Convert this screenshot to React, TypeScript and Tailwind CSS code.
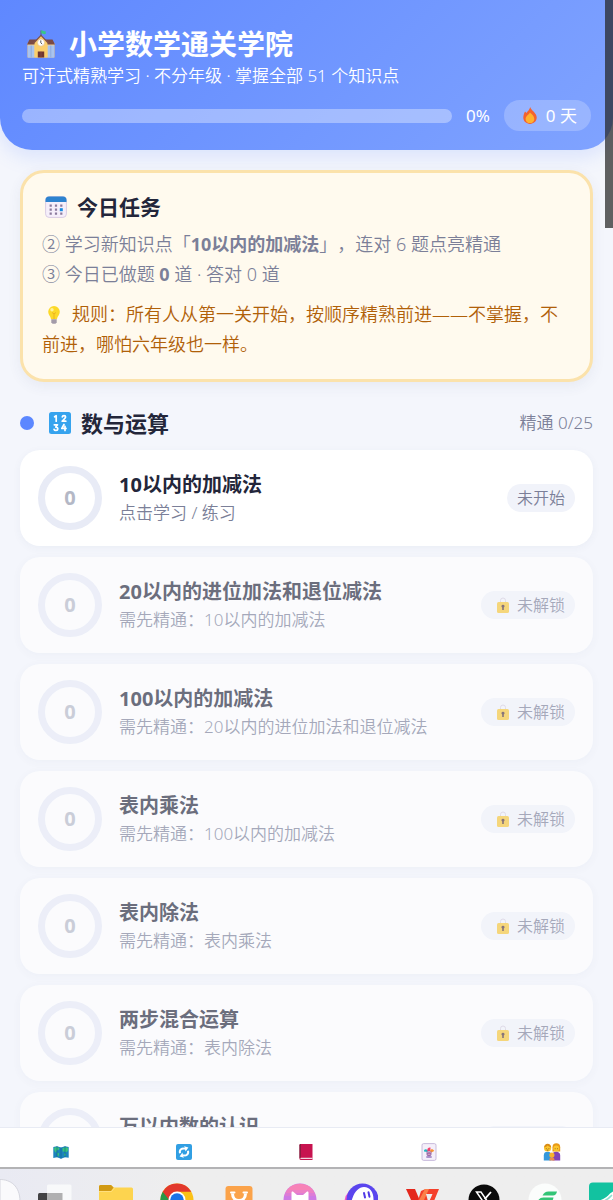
import type { ReactNode } from "react";
import { Lock } from "lucide-react";

type Topic = {
  name: string;
  hint: string;
  locked: boolean;
};

const topics: Topic[] = [
  { name: "10以内的加减法", hint: "点击学习 / 练习", locked: false },
  { name: "20以内的进位加法和退位减法", hint: "需先精通：10以内的加减法", locked: true },
  { name: "100以内的加减法", hint: "需先精通：20以内的进位加法和退位减法", locked: true },
  { name: "表内乘法", hint: "需先精通：100以内的加减法", locked: true },
  { name: "表内除法", hint: "需先精通：表内乘法", locked: true },
  { name: "两步混合运算", hint: "需先精通：表内除法", locked: true },
  { name: "万以内数的认识", hint: "需先精通：两步混合运算", locked: true },
];

/* ---------- Emoji-style icons ---------- */

const SchoolIcon = () => (
  <svg viewBox="0 0 28 28" className="h-7 w-7 shrink-0" aria-hidden="true">
    <path d="M0.500 13h27v14.500H.5z" fill="#f0cf94" />
    <path d="M2.500 9.500h23L28 14.500H0z" fill="#7a4a45" />
    <path d="M1 15.500h6.500v12H1zM20.500 15.500H27v12h-6.500z" fill="#a9c4ee" />
    <path d="M4.200 15.500v12M23.800 15.500v12" stroke="#8fabdd" strokeWidth="1" />
    <path d="M7.500 12.500 14 5.500l6.500 7v15h-13z" fill="#fbcf6b" />
    <path d="M6.500 13.200 14 5.400l7.500 7.800" fill="none" stroke="#84524a" strokeWidth="1.300" />
    <path d="M14 6V.5" stroke="#5c5560" strokeWidth="0.900" />
    <path d="M14.300.3c2 0 2 1.400 4.400 1v2.800c-2.400.5-2.400-.8-4.400-.8z" fill="#36c982" />
    <circle cx="14" cy="12.600" r="3.600" fill="#fff" stroke="#e3bd84" strokeWidth="0.700" />
    <path d="M13.800 10.400v2.400l1.400 1.300" fill="none" stroke="#444" strokeWidth="0.900" />
    <path d="M10.800 21.500h6.400v6h-6.400z" fill="#70362f" />
    <path d="M14 21.500v6" stroke="#955548" strokeWidth="0.600" />
  </svg>
);

const FireIcon = () => (
  <svg viewBox="0 0 14 17" className="h-[17px] w-[14px] shrink-0" aria-hidden="true">
    <path d="M7.200 0c.3 1.800 2.200 3.200 3.600 4.800 1.600 1.900 2.900 3.600 2.900 5.800 0 3.800-3 6.300-6.700 6.300S.3 14.400.3 10.600C.3 8.200 1.300 6.300 2 4.500c.6.300 1.100.9 1.300 1.600C4.500 4.300 6.700 2.700 7.200 0z" fill="#f4622e" />
    <path d="M7 5.400c1.700 1.800 4.300 3.400 4.300 6.500 0 2.500-1.800 4.200-4.300 4.200s-4.400-1.700-4.400-4.200C2.600 9.100 5.600 7.800 7 5.400z" fill="#ffb22e" />
  </svg>
);

const CalendarIcon = () => (
  <svg viewBox="0 0 22 22" className="h-[22px] w-[22px] shrink-0" aria-hidden="true">
    <rect x="0.600" y="0.600" width="20.800" height="20.800" rx="3.500" fill="#f6effa" stroke="#d9cce4" strokeWidth="1" />
    <path d="M0.500 6V4A3.500 3.500 0 0 1 4 .5h14A3.500 3.500 0 0 1 21.500 4v2z" fill="#2d83cf" />
    <g fill="#8b7b9d">
      <path d="M4.600 8.500h2.200v2.200H4.600zM9.900 8.500h2.200v2.200H9.900zM15.200 8.500h2.200v2.200h-2.200zM4.600 12.500h2.200v2.200H4.600zM9.900 12.500h2.200v2.200H9.900zM4.600 16.500h2.200v2.200H4.600zM9.900 16.500h2.200v2.200H9.900zM15.200 16.500h2.200v2.200h-2.200z" />
    </g>
    <path d="M14.800 12.200h3v3h-3z" fill="#168be0" />
  </svg>
);

const BulbIcon = () => (
  <svg viewBox="0 0 18 18" className="mr-2 ml-1 inline-block h-[18px] w-[18px] align-[-3px]" aria-hidden="true">
    <path d="M8 0a5.800 5.800 0 0 0-5.800 5.800c0 3 2.300 4.200 2.900 7.400h5.800c.6-3.200 2.900-4.400 2.900-7.400A5.800 5.800 0 0 0 8 0z" fill="#fcd928" />
    <path d="M6 6.500l2 1.400 2-1.400M8 8v5" fill="none" stroke="#eaa91c" strokeWidth="0.800" />
    <circle cx="6" cy="3.800" r="1.700" fill="#fff19a" />
    <path d="M5.300 13.200h5.400v3L9.500 17.800h-3l-1.200-1.600z" fill="#a39ba9" />
  </svg>
);

const NumbersIcon = () => (
  <svg viewBox="0 0 22 22" className="h-[22px] w-[22px] shrink-0" aria-hidden="true">
    <rect width="22" height="22" rx="2.500" fill="#36a3ee" />
    <g fill="none" stroke="#fff" strokeWidth="1.700" strokeLinecap="round" strokeLinejoin="round">
      <path d="M5.600 4.800 7.200 3.700v5.500" />
      <path d="M13.300 4.900c.2-1.600 3.300-1.700 3.300.2 0 1.500-2.500 2.400-3.400 4.100h3.600" />
      <path d="M5.300 12.800h3.200l-1.700 2.300c2.700-.1 2.500 3.300.1 3.300-.9 0-1.600-.4-1.800-1" />
      <path d="M15 12.500l-2.200 3.900h4.200M16 14.300v4.200" />
    </g>
  </svg>
);

const PadlockIcon = () => (
  <span className="relative flex h-4 w-3 shrink-0 items-end justify-center" aria-hidden="true">
    <Lock className="absolute top-0 h-3 w-3 text-[#d5cedd]" strokeWidth={2} />
    <svg viewBox="0 0 12 11" className="relative h-[11px] w-3">
      <rect width="12" height="11" rx="1.600" fill="#f6c637" />
      <path d="M6 2.700a1.500 1.500 0 0 1 .8 2.800V8H5.200V5.500A1.500 1.500 0 0 1 6 2.700z" fill="#4d2f35" />
    </svg>
  </span>
);

const MapIcon = () => (
  <svg viewBox="0 0 16 16" className="h-4 w-4" aria-hidden="true">
    <path d="M.3 3 4 2.200 8 3.400l4-1.200 3.700.8v10.800L12 13.300l-4 1.400-4-1.400-3.700.6z" fill="#1c83bd" />
    <path d="M1 3.800 3.800 3l2.700 1-.8 2-2 .6-.5 2.400L1.500 7zM9.500 4.200 12 3.200l3 .6v3l-2 1.600-1.500-.9-1.800.3zM4.300 8.500l2 1-.8 3-1.200-.6zM11 9.300l2 .8-.8 2.200-1.300-.8z" fill="#36c37b" />
    <path d="M4 2.200v11M8 3.400v11.200M12 2.200v11" stroke="#125f92" strokeWidth="0.600" />
  </svg>
);

const RefreshIcon = () => (
  <svg viewBox="0 0 16 16" className="h-4 w-4" aria-hidden="true">
    <rect width="16" height="16" rx="2" fill="#319fe3" />
    <path d="M4 9.200C3 5.800 6 3.700 9 4.900M12 6.800c1 3.400-2 5.500-5 4.300" fill="none" stroke="#fff" strokeWidth="2" />
    <path d="M8.200 2.300l4.200 1.200-2.800 4zM7.800 13.700l-4.200-1.200 2.800-4z" fill="#fff" />
  </svg>
);

const BookIcon = () => (
  <svg viewBox="0 0 16 16" className="h-4 w-4" aria-hidden="true">
    <path d="M1.500 1.200C1.500.5 2 0 2.700 0h11.800v16H3a1.500 1.500 0 0 1-1.500-1.500z" fill="#c7134f" />
    <path d="M1.500 1.200C1.500.5 2 0 2.700 0v13.500l-1.200.8z" fill="#6f2038" />
    <path d="M3 13.800h11.500V15H3a.6.600 0 0 1 0-1.200z" fill="#efd6df" />
  </svg>
);

const JokerIcon = () => (
  <svg viewBox="0 0 16 18" className="h-[18px] w-4" aria-hidden="true">
    <rect x="1" y="0.600" width="14" height="16.800" rx="1.600" fill="#f4effa" stroke="#c3b4d8" strokeWidth="0.900" />
    <path d="M3 8.500C2.800 5.800 5 5.500 7 7.300L6.500 9z" fill="#25b5c1" />
    <path d="M6.300 8.300C6 5.500 7.200 4.200 9.500 4.500L9.300 8z" fill="#f2416f" />
    <path d="M9 8.200c.5-2.300 3-2.600 4.200-.2L10.300 9.500z" fill="#f79431" />
    <path d="M5.500 8.500h5v2.700c0 1.200-1 2-2.500 2s-2.500-.8-2.500-2z" fill="#9a6aa8" />
    <path d="M6.500 9.500h.9M8.700 9.500h.9M6.700 11.300h2.700" stroke="#f7c4d4" strokeWidth="0.700" />
    <path d="M5.300 14h5.400" stroke="#7d57b0" strokeWidth="1.200" />
  </svg>
);

const FamilyIcon = () => (
  <svg viewBox="0 0 18 18" className="h-[18px] w-[18px]" aria-hidden="true">
    <path d="M9.500 8.500V4.200a3.800 3.800 0 0 1 7.700 0v4.300z" fill="#e89a17" />
    <path d="M.8 17.400v-5c0-2.500 1.400-3.600 3.800-3.600s3.900 1.200 3.900 3.600v5z" fill="#3498db" />
    <path d="M9.300 17.400v-5c0-2.500 1.500-3.600 3.900-3.600s4 1.200 4 3.600v5z" fill="#8043b8" />
    <circle cx="4.600" cy="5" r="3.600" fill="#fcc52c" />
    <path d="M1.100 4.500C1.100-.6 8.200-.6 8.200 4.500 6.500 4 5.300 3.300 4.600 2.600 3.800 3.600 2.500 4.300 1.100 4.500z" fill="#d98c16" />
    <circle cx="13.300" cy="5.400" r="2.900" fill="#fcc52c" />
    <path d="M3.300 5.300v.8M5.900 5.300v.8M12.200 5.400v.8M14.500 5.400v.8M3.800 7.100h1.600" stroke="#5b3a1e" strokeWidth="0.700" />
    <circle cx="8.900" cy="12" r="2.600" fill="#f7b32b" />
    <path d="M6.300 17.400c0-2.500 1-3.200 2.600-3.200s2.700.7 2.700 3.200z" fill="#e98a4a" />
  </svg>
);

const navItems = [
  { label: "地图", icon: <MapIcon /> },
  { label: "复习", icon: <RefreshIcon /> },
  { label: "错题本", icon: <BookIcon /> },
  { label: "卡片", icon: <JokerIcon /> },
  { label: "家长", icon: <FamilyIcon /> },
];

/* ---------- Desktop taskbar icons ---------- */

const taskbarApps: { label: string; art: ReactNode }[] = [
  {
    label: "任务视图",
    art: (
      <>
        <rect x="0" y="11" width="25" height="24" rx="1.500" fill="#424244" />
        <rect x="9" y="2.500" width="24.500" height="24" rx="1.500" fill="#f8f9fa" />
        <path d="M9 11h15.500v16H9z" fill="#b0b0b1" />
      </>
    ),
  },
  {
    label: "文件资源管理器",
    art: (
      <>
        <path d="M0 4.500A1.500 1.500 0 0 1 1.500 3H12l3 2.500h17.500A1.500 1.500 0 0 1 34 7v28H0z" fill="#fdd44f" />
        <path d="M0 4.500A1.500 1.500 0 0 1 1.500 3H12l2.500 2.500L12 9H0z" fill="#d19a14" />
        <path d="M0 9.500h12.500L15.500 6" fill="none" stroke="#ffe28a" strokeWidth="0.800" />
      </>
    ),
  },
  {
    label: "Chrome",
    art: (
      <>
        <circle cx="17" cy="18" r="16.500" fill="#fbc116" />
        <path d="M17 18 2.700 9.700A16.500 16.500 0 0 0 17 34.500z" fill="#279847" />
        <path d="M2.700 9.700a16.500 16.500 0 0 1 28.600 0H17L10 19z" fill="#e2382c" />
        <circle cx="17" cy="18" r="8.500" fill="#fff" />
        <circle cx="17" cy="18" r="6.800" fill="#1a73e8" />
      </>
    ),
  },
  {
    label: "商城",
    art: (
      <>
        <rect x="3.500" y="4" width="27" height="28" rx="3" fill="#fba34a" />
        <path d="M10.500 11.500c0 4 2.500 7 6.500 7s6.500-3 6.500-7" fill="none" stroke="#fff" strokeWidth="3" />
        <path d="M9 10.500h3.500M21.500 10.500H25" stroke="#fff" strokeWidth="2" strokeLinecap="round" />
      </>
    ),
  },
  {
    label: "猫猫",
    art: (
      <>
        <circle cx="17" cy="18" r="16.500" fill="#ce7ae5" />
        <path d="M4 8a16.500 16.500 0 0 1 26 0z" fill="#f783b7" />
        <path d="M4 8h26l1.700 3H2.300z" fill="#ec80c6" />
        <path d="M2.300 11h29.400l1 3H1.300z" fill="#dd7cd6" />
        <path d="M8.500 11c0-1.500 1-1.800 2-1l3.500 3h6l3.500-3c1-.8 2-.5 2 1v21h-17z" fill="#fff" />
      </>
    ),
  },
  {
    label: "幽灵",
    art: (
      <>
        <circle cx="15" cy="20" r="14.500" fill="#f255c9" />
        <circle cx="18.500" cy="17.500" r="16" fill="#5a45ee" />
        <path d="M5 26c1.500-3 2-6 3.500-10C11 9 15 5 20 5c6 0 9.500 5 9.500 12v15H5z" fill="#fff" />
        <path d="M20 11l1 4.500M24.500 10.200l1 4.500" stroke="#4f39e6" strokeWidth="2" strokeLinecap="round" />
      </>
    ),
  },
  {
    label: "WPS",
    art: (
      <>
        <path d="M1 7h9l5.500 13L12 31z" fill="#e4271c" />
        <path d="M16 9l4.500-2H34L24 31h-5l2-12-3 1-5.500 11H9z" fill="#f4402b" />
        <path d="M20 7h4l-9 20-3-5z" fill="#fb8049" />
        <path d="M21 12h6.500l-4 9z" fill="#eeeeee" />
      </>
    ),
  },
  {
    label: "X",
    art: (
      <>
        <circle cx="17" cy="18" r="15.500" fill="#0a0a0a" />
        <path d="M9.500 10h4.500l11 16h-4.500z" fill="none" stroke="#fff" strokeWidth="1.500" />
        <path d="M24 10l-6.300 7.200M16 19 9.500 26" stroke="#fff" strokeWidth="1.800" />
      </>
    ),
  },
  {
    label: "飞行",
    art: (
      <>
        <circle cx="17" cy="18" r="16.500" fill="#fbfdfc" />
        <path d="M14.500 13.500c1.500-2.500 3-4 6-4H29c-.5 2.500-2 4-4 4z" fill="#33c577" />
        <path d="M9 20.500c1.500-3.500 3.500-5 6.500-5h10c-.5 3-2 5-4.500 5z" fill="#33c577" />
      </>
    ),
  },
  {
    label: "会议",
    art: (
      <>
        <rect x="0" y="0.500" width="34" height="34" rx="4" fill="#12c2a0" />
        <path d="M8 19c6-1 10-4 13-7.500l5-3.500v8l-8 5z" fill="#fff" />
        <path d="M15 19c4-1.500 6-4 8-6" fill="none" stroke="#8fe0d0" strokeWidth="1.500" />
      </>
    ),
  },
];

const TopicCard = ({ name, hint, locked }: Topic) => (
  <li>
    <button
      type="button"
      disabled={locked}
      className={`flex w-full items-center gap-[17px] rounded-[20px] bg-white px-[18px] py-4 text-left shadow-[0_2px_8px_rgba(60,70,120,0.05)] ${locked ? "opacity-65" : ""}`}
    >
      <span className="flex h-16 w-16 shrink-0 items-center justify-center rounded-full border-[7px] border-[#e8ebf6] text-xl font-bold text-[#b4b8c6]">
        0
      </span>
      <span className="min-w-0 flex-1 pt-0.5">
        <span className="block truncate text-xl leading-7 font-bold text-[#23263a]">{name}</span>
        <span className="block truncate text-[17px] leading-7 font-[350] text-[#7b7f98]">{hint}</span>
      </span>
      <span className="flex h-7 shrink-0 items-center rounded-full bg-[#f1f3fa] px-[10px] text-base font-[350] text-[#7b7f98]">
        {locked && (
          <span className="mr-2 ml-1.5">
            <PadlockIcon />
          </span>
        )}
        {locked ? "未解锁" : "未开始"}
      </span>
    </button>
  </li>
);

const App = () => {
  return (
    <div className="flex h-screen flex-col overflow-hidden bg-[#f4f6fc] font-['Noto_Sans','Noto_Sans_CJK_SC',sans-serif] text-[#23263a]">
      <div className="min-h-0 flex-1 overflow-hidden">
        {/* Header */}
        <header className="rounded-b-[32px] bg-linear-135 from-[#5f88ff] to-[#80a3ff] px-[22px] pt-[27px] pb-[19px] text-white shadow-[0_6px_20px_rgba(91,135,255,0.18)]">
          <h1 className="flex items-center gap-[14px] pl-[5px] text-[28px] leading-[34px] font-bold">
            <SchoolIcon />
            小学数学通关学院
          </h1>
          <p className="mt-[3px] text-[17px] leading-6 font-[350]">可汗式精熟学习 · 不分年级 · 掌握全部 51 个知识点</p>
          <div className="mt-3 flex items-center gap-[14px]">
            <div
              role="progressbar"
              aria-label="总进度"
              aria-valuenow={0}
              aria-valuemin={0}
              aria-valuemax={100}
              className="h-[14px] flex-1 rounded-full bg-white/35"
            />
            <span className="text-[17px]">0%</span>
            <span className="flex h-[31px] items-center gap-[9px] rounded-full bg-white/22 pr-[14px] pl-[19px] text-[17px]">
              <FireIcon />0 天
            </span>
          </div>
        </header>

        <main className="px-5 pt-5">
          {/* Today's tasks */}
          <section className="rounded-[24px] border-3 border-[#fbe2ab] bg-[#fffaee] px-[19px] py-5 text-lg leading-[30px] font-[350] text-[#7b7f98] shadow-[0_4px_14px_rgba(60,70,120,0.07)] [text-spacing-trim:space-all]">
            <h2 className="mb-2 flex items-center gap-[10px] pl-[3px] text-[21px] leading-7 font-bold text-[#23263a]">
              <CalendarIcon />
              今日任务
            </h2>
            <p>
              ② 学习新知识点「<b className="font-bold">10以内的加减法</b>」，连对 6 题点亮精通
            </p>
            <p>
              ③ 今日已做题 <b className="font-bold">0</b> 道 · 答对 0 道
            </p>
            <p className="mt-[10px] text-[#b06008]">
              <BulbIcon />
              规则：所有人从第一关开始，按顺序精熟前进——不掌握，不前进，哪怕六年级也一样。
            </p>
          </section>

          {/* Topic list */}
          <section>
            <div className="mt-[26px] mb-3 flex items-center">
              <span className="h-[14px] w-[14px] rounded-full bg-[#5b87ff]" />
              <h2 className="ml-[15px] flex items-center gap-[10px] text-[22px] leading-[30px] font-bold">
                <NumbersIcon />
                数与运算
              </h2>
              <span className="ml-auto text-[17px] font-[350] text-[#7b7f98]">精通 0/25</span>
            </div>
            <ul className="flex flex-col gap-[11px]">
              {topics.map((topic) => (
                <TopicCard key={topic.name} {...topic} />
              ))}
            </ul>
          </section>
        </main>
      </div>

      {/* Bottom navigation */}
      <nav className="relative flex h-[40px] shrink-0 border-t border-[#e8ebf4] bg-white">
        {navItems.map((item) => (
          <button key={item.label} type="button" aria-label={item.label} className="flex flex-1 items-center justify-center pt-2">
            {item.icon}
          </button>
        ))}
      </nav>

      {/* Taskbar */}
      <footer className="flex h-[33px] shrink-0 overflow-hidden border-t-2 border-[#b3b3b5] bg-linear-to-r from-[#e9eaf3] to-[#eeeeee] to-30%">
        <svg viewBox="0 0 24 31" className="h-[31px] w-6 shrink-0" aria-hidden="true">
          <path d="M0 10.500c10 0 20 6 20 22H0z" fill="#fafafc" stroke="#d5d6de" strokeWidth="1" />
        </svg>
        <div className="flex w-screen shrink-0 pt-[13px]">
          {taskbarApps.map((app) => (
            <span key={app.label} className="flex w-[10%] justify-center">
              <svg viewBox="0 0 34 36" className="h-9 w-[34px] shrink-0" role="img" aria-label={app.label}>
                {app.art}
              </svg>
            </span>
          ))}
        </div>
      </footer>

      {/* Scrollbar thumb */}
      <div className="fixed top-0 right-0 h-[19%] w-2 bg-[#252525]/72" />
    </div>
  );
};

export default App;
